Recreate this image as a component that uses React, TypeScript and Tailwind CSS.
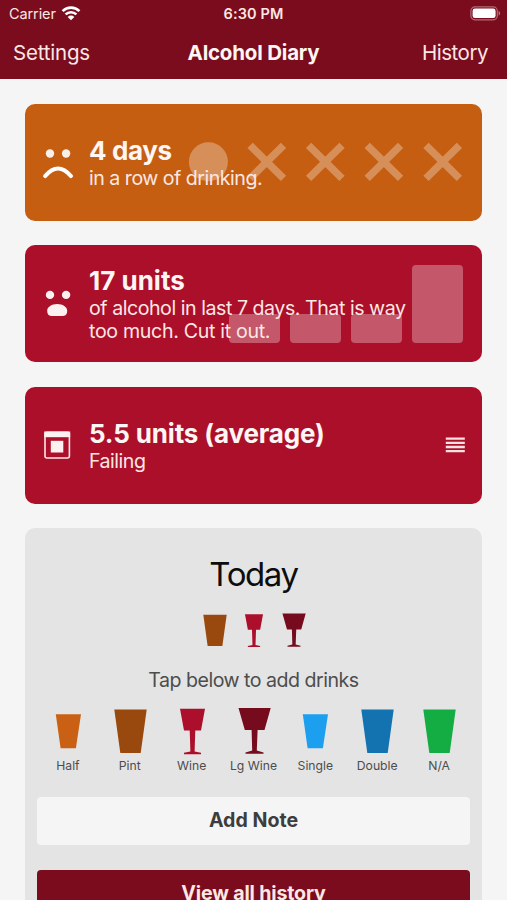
import React from 'react';

type Shape = 'small' | 'tall' | 'wine' | 'largeWine';

const shapes: Record<Shape, string> = {
  small: 'M7.8 11.3H33L27.9 45.2H12.6Z',
  tall: 'M4.3 6.5H36.7L30.7 50H10.3Z',
  wine: 'M8 5.8H33L29 27.5H23.3L22.6 48.4L29 49.8V51.2H12V49.8L18.4 48.4L17.7 27.5H12Z',
  largeWine: 'M4.5 5H36.7L30.5 27H23.6L22.8 47.6L29.5 49.4V50.8H11.5V49.4L18.2 47.6L17.6 27H10.8Z',
};

const drinks: { name: string; shape: Shape; color: string }[] = [
  { name: 'Half', shape: 'small', color: '#c96013' },
  { name: 'Pint', shape: 'tall', color: '#9a490e' },
  { name: 'Wine', shape: 'wine', color: '#ac0f2c' },
  { name: 'Lg Wine', shape: 'largeWine', color: '#760b1d' },
  { name: 'Single', shape: 'small', color: '#1c9fef' },
  { name: 'Double', shape: 'tall', color: '#1273b0' },
  { name: 'N/A', shape: 'tall', color: '#13ad43' },
];

const todaysDrinks = [drinks[1], drinks[2], drinks[3]];

function Glass({ shape, color, className }: { shape: Shape; color: string; className: string }) {
  return (
    <svg viewBox="0 0 41 54" className={className} fill={color}>
      <path d={shapes[shape]} />
    </svg>
  );
}

function WifiIcon() {
  return (
    <svg viewBox="0 0 20 15" className="h-[15px] w-5" fill="none" stroke="currentColor" strokeWidth="2.7">
      <path d="M1.6 5.1a12 12 0 0 1 16.8 0" />
      <path d="M4.6 8.4a7.8 7.8 0 0 1 10.8 0" />
      <path d="M10 14.2L6.7 10.9a4.7 4.7 0 0 1 6.6 0Z" fill="currentColor" stroke="none" />
    </svg>
  );
}

function BatteryIcon() {
  return (
    <svg viewBox="0 0 31 15" className="h-[15px] w-[31px]">
      <rect x="0.9" y="0.9" width="26.4" height="12.9" rx="4" fill="none" stroke="#fff" strokeOpacity="0.4" strokeWidth="1.2" />
      <rect x="2.6" y="2.6" width="23" height="9.5" rx="2.4" fill="#fff" />
      <path d="M28.6 5.1c2 .7 2 3.8 0 4.5Z" fill="#fff" fillOpacity="0.45" />
    </svg>
  );
}

function SadFace() {
  return (
    <svg viewBox="0 0 32 32" className="h-8 w-8">
      <circle cx="8" cy="6.5" r="4.2" fill="#faf0ea" />
      <circle cx="24.1" cy="6.5" r="4.2" fill="#faf0ea" />
      <path d="M3.2 29Q16 14 28.9 29" fill="none" stroke="#fff" strokeWidth="4.2" strokeLinecap="round" />
    </svg>
  );
}

function ShockedFace() {
  return (
    <svg viewBox="0 0 32 32" className="h-8 w-8" fill="#fcf0f0">
      <circle cx="8" cy="6.9" r="4.2" />
      <circle cx="24.1" cy="6.9" r="4.2" />
      <path d="M15.2 16C20.6 16 25.2 18.800 25.2 22.800C25.200 26.800 23 28.100 20 28.100C18.400 28.100 17.500 27.900 15.200 27.900C12.900 27.900 12 28.100 10.400 28.100C7.400 28.100 5.200 26.800 5.200 22.800C5.200 18.800 9.800 16 15.200 16Z" />
    </svg>
  );
}

function CalendarIcon() {
  return (
    <svg viewBox="0 0 32 32" className="h-8 w-8">
      <rect x="3" y="3.2" width="24.4" height="25.8" rx="2" fill="none" stroke="#fbe6e8" strokeWidth="1.6" />
      <path d="M2.2 2.5H28.2V8.2H2.2Z" fill="#fcf0f0" />
      <path d="M8.8 11.8H21.3V23.5H8.8Z" fill="#fcf0f0" />
    </svg>
  );
}

function ListIcon() {
  return (
    <svg viewBox="0 0 20 16" className="h-4 w-5" stroke="#fbe0e4" strokeWidth="2.3">
      <path d="M.8 1.6H19.8M.8 5.8H19.8M.8 10H19.8M.8 14.2H19.8" />
    </svg>
  );
}

function StreakMarks() {
  return (
    <svg viewBox="0 0 276 40" className="absolute top-[38px] right-[18px] h-10 w-[276px] opacity-30">
      <circle cx="20.4" cy="19.8" r="19.5" fill="#fff" />
      {[78.8, 137.3, 195.9, 254.7].map((x) => (
        <path
          key={x}
          d={`M${x - 16.7} 3.3L${x + 16.7} 36.3M${x + 16.7} 3.3L${x - 16.7} 36.3`}
          stroke="#fff"
          strokeWidth="7.5"
        />
      ))}
    </svg>
  );
}

function UnitBars() {
  const bars = ['h-[29px]', 'h-[29px]', 'h-[29px]', 'h-[78px]'];
  return (
    <div className="absolute right-[19px] bottom-[19px] flex items-end gap-[9.5px]">
      {bars.map((height, i) => (
        <div key={i} className={`w-[51.5px] rounded-[4px] bg-white/30 ${height}`} />
      ))}
    </div>
  );
}

interface StatCardProps {
  color: string;
  icon: React.ReactNode;
  title: string;
  titleClass: string;
  children: React.ReactNode;
  decoration?: React.ReactNode;
  action?: React.ReactNode;
}

function StatCard({ color, icon, title, titleClass, children, decoration, action }: StatCardProps) {
  return (
    <div className={`relative flex h-[117px] shrink-0 items-center rounded-[10px] pr-[17px] pl-[17px] ${color}`}>
      {decoration}
      <div className="w-[47px] shrink-0">{icon}</div>
      <div className="relative flex-1 pt-px">
        <h2 className={`text-[26px] leading-8 font-bold text-[#fdf6f4] ${titleClass}`}>{title}</h2>
        <div className="text-[19.6px] leading-[23.3px] whitespace-nowrap text-[#fbe7e4]">{children}</div>
      </div>
      {action}
    </div>
  );
}

export default function App() {
  return (
    <div className="flex h-[900px] w-[507px] flex-col overflow-hidden bg-[#f5f5f5] font-['Inter',sans-serif]">
      <header className="h-[79px] shrink-0 bg-[#7a0c1d] text-[#fbe7e4]">
        <div className="grid h-[27px] grid-cols-3 items-center px-2">
          <div className="flex items-center gap-[5px] pl-px">
            <span className="text-[14.5px] tracking-[-0.1px]">Carrier</span>
            <span className="text-white"><WifiIcon /></span>
          </div>
          <span className="text-center text-[14.5px] font-semibold tracking-[0.1px]">6:30 PM</span>
          <div className="-mr-0.5 flex justify-end"><BatteryIcon /></div>
        </div>
        <nav className="grid h-[52px] grid-cols-3 items-center px-[13px] text-[20.5px]">
          <button type="button" className="text-left tracking-[-0.2px]">Settings</button>
          <h1 className="text-center font-bold tracking-[-0.2px] whitespace-nowrap text-[#fdf6f4]">Alcohol Diary</h1>
          <button type="button" className="pr-[6px] text-right tracking-[-0.5px]">History</button>
        </nav>
      </header>

      <main className="flex flex-col gap-[24.4px] px-[25px] pt-[25px]">
        <StatCard
          color="bg-[#c65e11]"
          icon={<SadFace />}
          title="4 days"
          titleClass="tracking-[-0.4px]"
          decoration={<StreakMarks />}
        >
          <p className="tracking-[-0.5px]">in a row of drinking.</p>
        </StatCard>
        <StatCard
          color="bg-[#ac0f2a]"
          icon={<ShockedFace />}
          title="17 units"
          titleClass="tracking-normal"
          decoration={<UnitBars />}
        >
          <p>
            <span className="tracking-[-0.46px]">of alcohol in last 7 days. That is way</span>
            <br />
            <span className="tracking-[-0.32px]">too much. Cut it out.</span>
          </p>
        </StatCard>
        <StatCard
          color="bg-[#ac0f2a]"
          icon={<CalendarIcon />}
          title="5.5 units (average)"
          titleClass="tracking-[-0.15px]"
          action={<ListIcon />}
        >
          <p className="tracking-[-0.5px]">Failing</p>
        </StatCard>

        <section className="flex h-[460px] shrink-0 flex-col items-center rounded-[10px] bg-[#e4e4e4] px-3 pt-[25.6px]">
          <h2 className="text-[33px] leading-10 tracking-[-1.4px] text-[#0d0d0d]">Today</h2>
          <div className="mt-4 flex pl-[1px]">
            {todaysDrinks.map((drink) => (
              <div key={drink.name} className="flex w-[39.5px] justify-center">
                <Glass shape={drink.shape} color={drink.color} className="h-[39px] w-[30px]" />
              </div>
            ))}
          </div>
          <p className="mt-[19px] text-[19.6px] leading-6 tracking-[-0.5px] text-[#4d4d4d]">Tap below to add drinks</p>
          <div className="mt-[10.8px] grid w-full grid-cols-7">
            {drinks.map((drink) => (
              <button key={drink.name} type="button" className="flex flex-col items-center">
                <Glass shape={drink.shape} color={drink.color} className="ml-[1.2px] h-[54px] w-[41px]" />
                <span className="mt-px text-[12.2px] leading-4 whitespace-nowrap text-[#4d4d4d]">{drink.name}</span>
              </button>
            ))}
          </div>
          <button type="button" className="mt-[23.6px] h-12 w-full shrink-0 rounded-[4px] bg-[#f5f5f5] text-[19.6px] font-bold text-[#3d3d3d]">
            Add Note
          </button>
          <button type="button" className="mt-[24.5px] h-12 w-full shrink-0 rounded-[4px] bg-[#7a0c1d] text-[19.6px] font-bold tracking-[-0.15px] text-[#fbe7e4]">
            View all history
          </button>
        </section>
      </main>
    </div>
  );
}
